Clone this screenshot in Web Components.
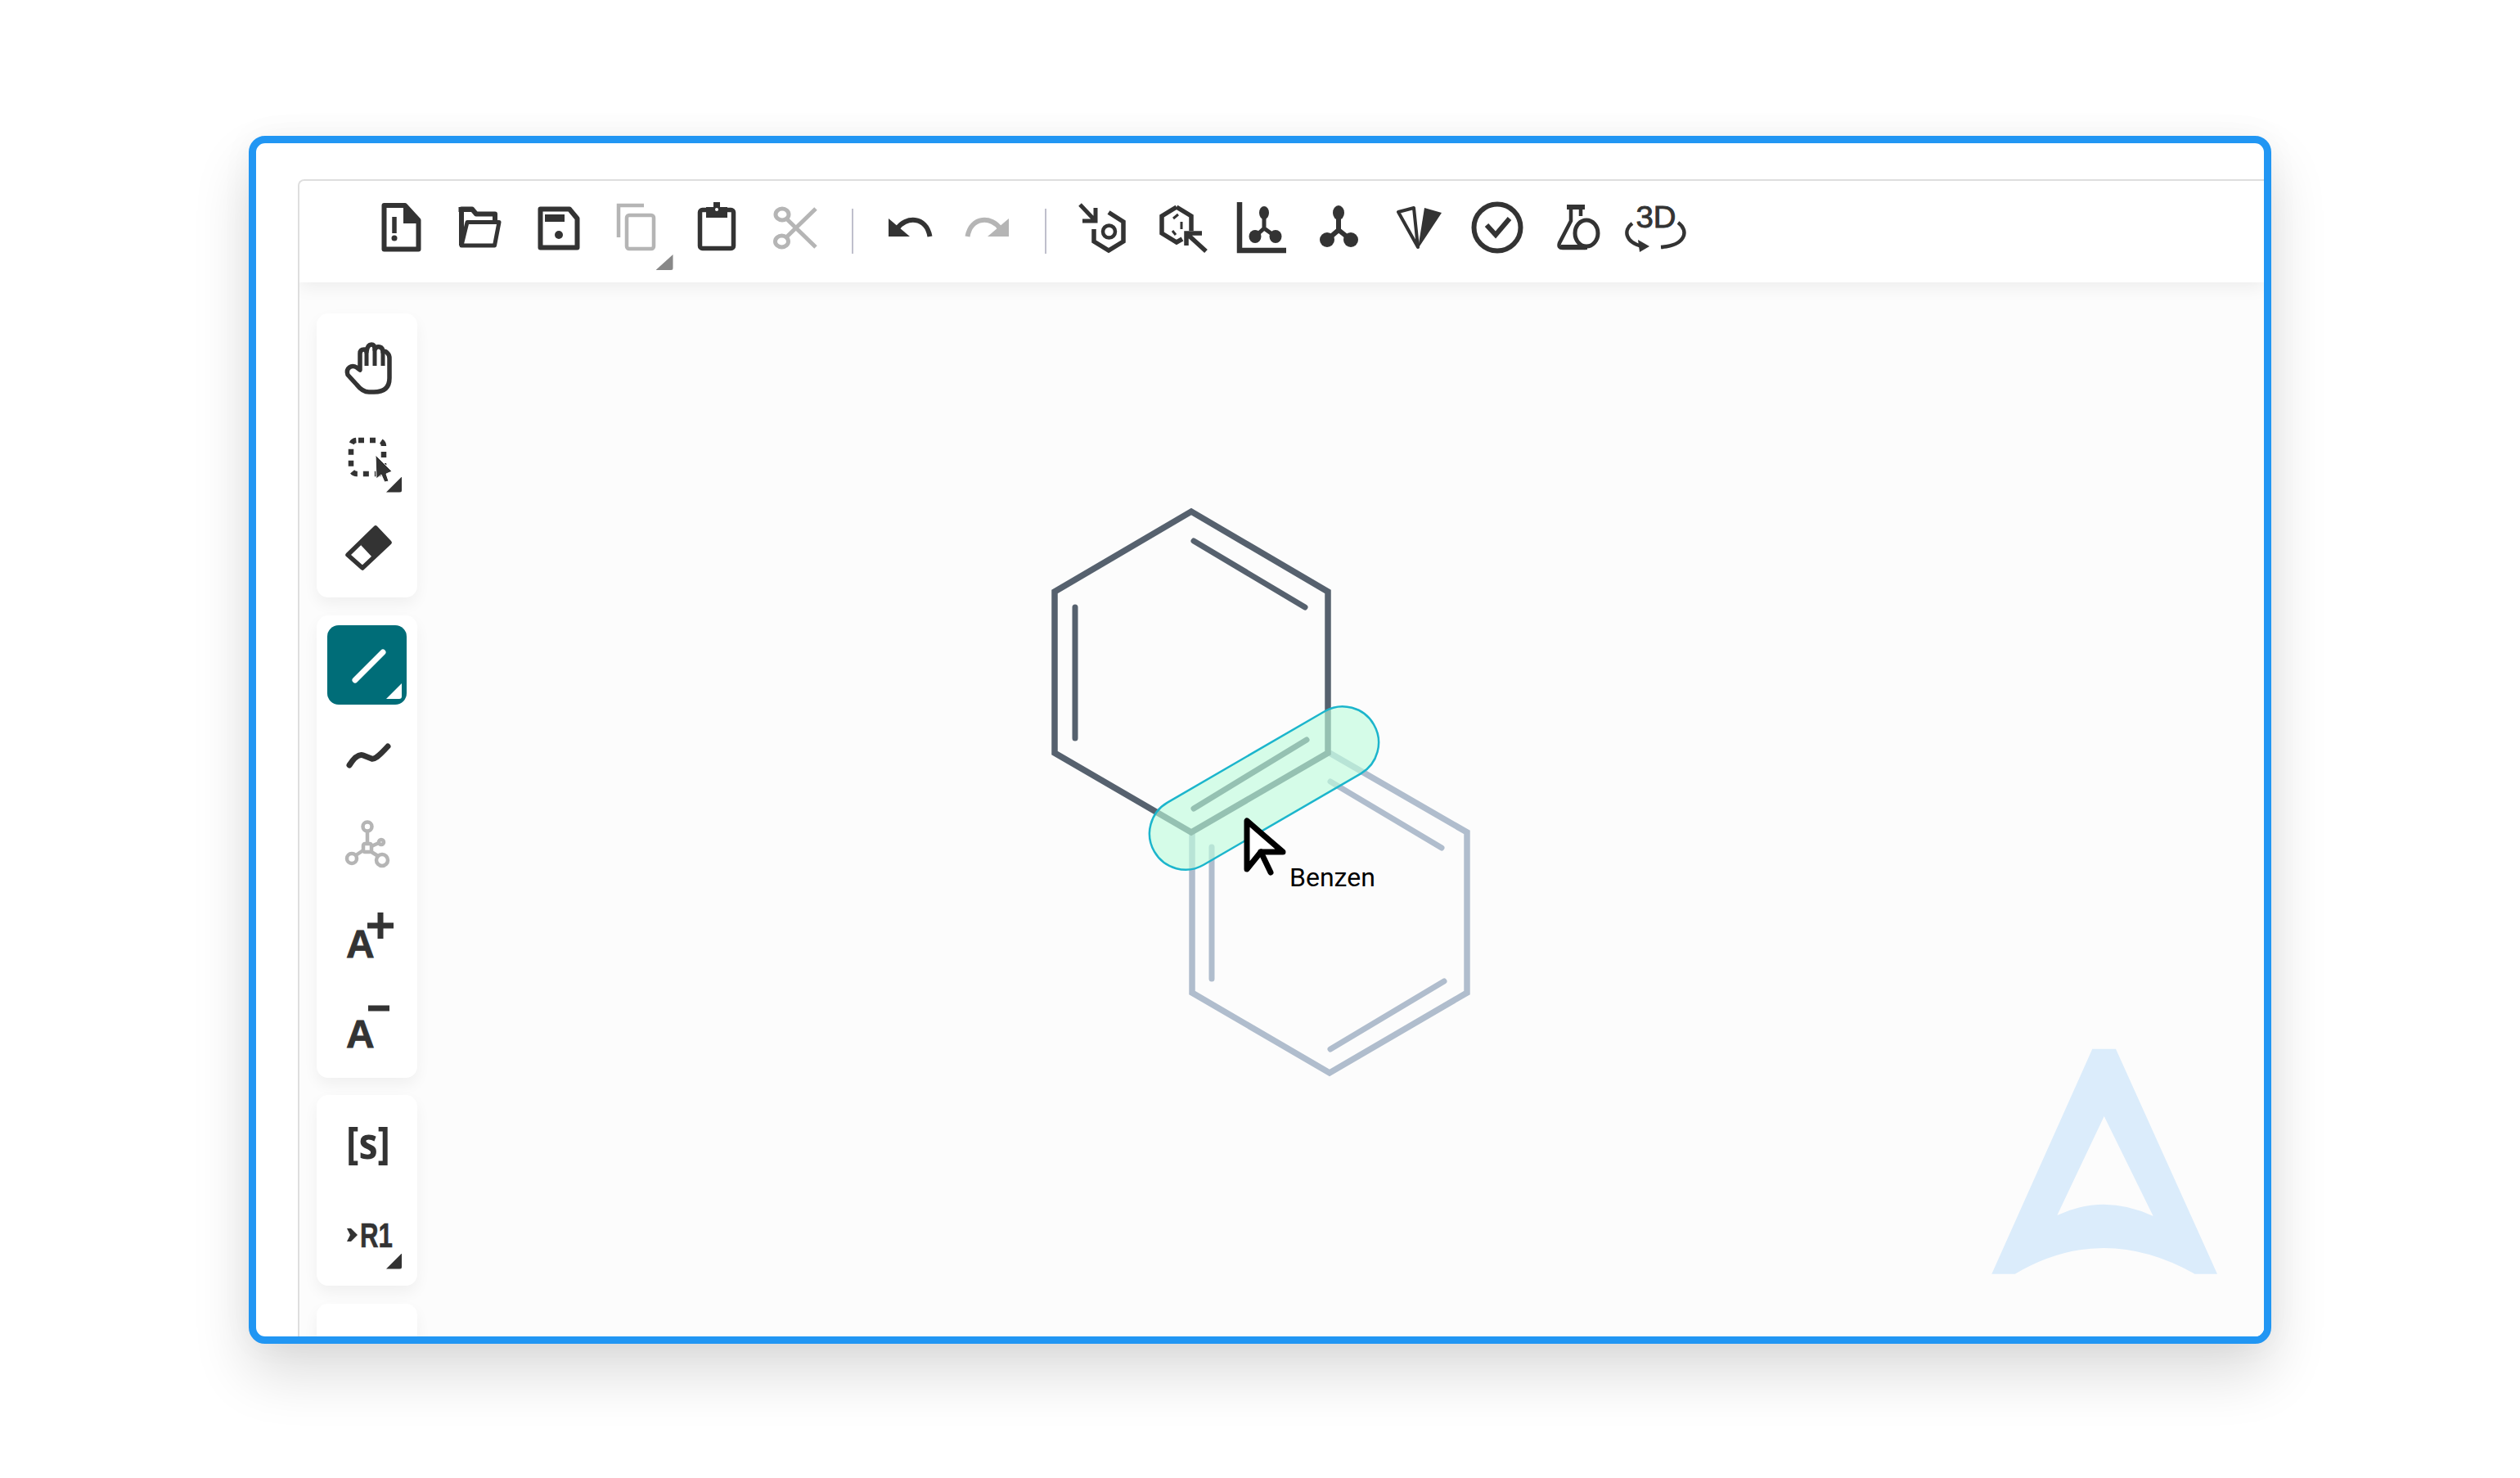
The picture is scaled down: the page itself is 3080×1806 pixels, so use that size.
<!DOCTYPE html>
<html lang="en"><head><meta charset="utf-8"><title>Editor</title>
<style>
html,body{margin:0;padding:0;background:#fff}
body{width:3080px;height:1806px;overflow:hidden;padding:166px 0 0 304px;box-sizing:border-box;font-family:"Liberation Sans",sans-serif}
</style></head><body>
<x-frame>
 <x-editor>
  <x-toolbar slot="top">
   <x-tool top><svg viewBox="-35 -35 70 70"><path d="M-20.500,-27H5L21.500,-9V26.500H-20.500Z" fill="none" stroke="currentColor" stroke-width="6" stroke-linejoin="round"/><path d="M3,-28L22,-8V-5H3Z" fill="currentColor"/><path d="M-8,-13V7" stroke="currentColor" stroke-width="5.500"/><circle cx="-8" cy="13" r="3.500" fill="currentColor"/></svg></x-tool>
   <x-tool top><svg viewBox="-35 -35 70 70"><path d="M-22,22V-22.500H-9L-4,-16.500H19V-6" fill="none" stroke="currentColor" stroke-width="6" stroke-linejoin="round"/><path d="M-25.500,-25H-8V-19H-25.500Z" fill="currentColor"/><path d="M-15,-6.500H24L18.500,22H-22Z" fill="none" stroke="currentColor" stroke-width="5" stroke-linejoin="round"/></svg></x-tool>
   <x-tool top><svg viewBox="-35 -35 70 70"><path d="M-22.500,-22.500H13L22.500,-11V24.500H-22.500Z" fill="none" stroke="currentColor" stroke-width="6" stroke-linejoin="round"/><rect x="-17" y="-16" width="24" height="9" fill="currentColor"/><circle cx="0" cy="9" r="5" fill="currentColor"/></svg></x-tool>
   <x-tool top disabled corner><svg viewBox="-35 -35 70 70"><path d="M8,-27H-23V12" fill="none" stroke="currentColor" stroke-width="4.500"/><rect x="-13" y="-15" width="33" height="41" rx="3" fill="none" stroke="currentColor" stroke-width="4.500"/></svg></x-tool>
   <x-tool top><svg viewBox="-35 -35 70 70"><rect x="-20.500" y="-21.500" width="41" height="47" rx="3" fill="none" stroke="currentColor" stroke-width="5.500"/><path d="M-13,-25H-4V-31H4V-25H13V-12H-13Z" fill="currentColor"/><circle cx="0" cy="-22" r="2" fill="#fff"/></svg></x-tool>
   <x-tool top disabled><svg viewBox="-35 -35 70 70"><g fill="none" stroke="currentColor" stroke-width="5"><ellipse cx="-16" cy="-16" rx="8" ry="7"/><ellipse cx="-16.500" cy="17" rx="8" ry="7"/><path d="M-10,-10L25,24M-10,11L25,-23"/></g></svg></x-tool>
   <x-divider></x-divider>
   <x-tool top><svg viewBox="-35 -35 70 70"><path d="M-25,-11V11H1Z" fill="currentColor"/><path d="M-14,1C-5,-13 21,-15 25.500,11" fill="none" stroke="currentColor" stroke-width="6"/></svg></x-tool>
   <x-tool top disabled><svg viewBox="-35 -35 70 70"><g transform="scale(-1,1)"><path d="M-25,-11V11H1Z" fill="currentColor"/><path d="M-14,1C-5,-13 21,-15 25.500,11" fill="none" stroke="currentColor" stroke-width="6"/></g></svg></x-tool>
   <x-divider></x-divider>
   <x-tool top><svg viewBox="-35 -35 70 70"><g fill="none" stroke="currentColor"><path d="M-27,-28L-9,-9M-8,-24V-8H-24" stroke-width="5"/><path d="M8,-18.500L26,-7V17L8,28L-10,17V2" stroke-width="5.500"/><circle cx="8.500" cy="5" r="7.500" stroke-width="4.500"/></g></svg></x-tool>
   <x-tool top><svg viewBox="-35 -35 70 70"><g fill="none" stroke="currentColor"><path d="M-5,-25L13,-14V4M2,14L-5,18L-23,7V-14L-5,-25" stroke-width="5.500"/><path d="M1,-7V2M-10,4L-6,9M-9,-11L-3,-16" stroke-width="3"/><path d="M31,29L8,8M7,22V7H26" stroke-width="5.500"/></g></svg></x-tool>
   <x-tool top><svg viewBox="-35 -35 70 70"><path d="M-25,-31V28H32" fill="none" stroke="currentColor" stroke-width="6.500"/><path d="M5,-14V1L-6,11M5,1L19,11" fill="none" stroke="currentColor" stroke-width="5"/><ellipse cx="5" cy="-18" rx="6" ry="8" fill="currentColor"/><ellipse cx="-6" cy="11" rx="7.500" ry="8" fill="currentColor"/><ellipse cx="19" cy="11" rx="7.500" ry="8" fill="currentColor"/></svg></x-tool>
   <x-tool top><svg viewBox="-35 -35 70 70"><path d="M0,-14V3L-14,15M0,3L15,15" fill="none" stroke="currentColor" stroke-width="6"/><ellipse cx="0" cy="-18" rx="7" ry="9" fill="currentColor"/><ellipse cx="-14" cy="15" rx="9" ry="9" fill="currentColor"/><ellipse cx="15" cy="15" rx="9" ry="9" fill="currentColor"/></svg></x-tool>
   <x-tool top><svg viewBox="-35 -35 70 70"><path d="M-24,-19L-5,-24L0,24Z" fill="none" stroke="currentColor" stroke-width="4" stroke-linejoin="round"/><path d="M8,-24L29,-18L0,26Z" fill="currentColor"/></svg></x-tool>
   <x-tool top><svg viewBox="-35 -35 70 70"><circle cx="1" cy="0" r="28.500" fill="none" stroke="currentColor" stroke-width="6"/><path d="M-12,-3L-1,9L16,-11" fill="none" stroke="currentColor" stroke-width="6"/></svg></x-tool>
   <x-tool top><svg viewBox="-35 -35 70 70"><g fill="none" stroke="currentColor"><path d="M-11,-25H11" stroke-width="6"/><path d="M-6,-25V-8L-20,19Q-22,25 -16,25H12M6,-25V-14" stroke-width="4.500"/><ellipse cx="13" cy="7" rx="14" ry="16" stroke-width="5"/><path d="M-18,24H14" stroke-width="6"/></g></svg></x-tool>
   <x-tool top><svg viewBox="-35 -35 70 70"><text x="2" y="0" text-anchor="middle" font-family="Liberation Sans" font-size="37" textLength="49" lengthAdjust="spacingAndGlyphs" stroke="currentColor" stroke-width=".9" fill="currentColor">3D</text><g fill="none" stroke="currentColor" stroke-width="4.500"><path d="M-27,-5C-38,3 -36,18 -15,23M29,-6C43,4 38,22 8,24"/></g><path d="M-20,15L-6,23L-18,30Z" fill="currentColor"/></svg></x-tool>
  </x-toolbar>
  <x-canvas>
   <x-side>
    <x-panel first>
     <x-tool><svg viewBox="-35 -35 70 70"><path d="M-9,2V-18Q-9,-23 -4,-23Q-1,-23 -1,-20Q0,-29 5,-29Q9,-29 9,-23Q11,-27 15,-26Q19,-25 19,-20Q22,-22 25,-18Q27,-16 27,-12V12Q27,29 8,29H2Q-6,29 -13,20L-24,8Q-26,2 -22,-1Q-18,-4 -13,-1Z" fill="none" stroke="currentColor" stroke-width="5.500" stroke-linejoin="round"/><path d="M-1,-20V-3M9,-23V-3M19,-20V-3" stroke="currentColor" stroke-width="5"/></svg></x-tool>
     <x-tool corner><svg viewBox="-35 -35 70 70"><rect x="-20" y="-22" width="40" height="41" rx="7" fill="none" stroke="currentColor" stroke-width="6.500" stroke-dasharray="7 7" stroke-dashoffset="-2"/><path d="M10,-4L30,16L23,19L26,28L21,29L17,20L11,25Z" fill="currentColor" stroke="#fff" stroke-width="1"/></svg></x-tool>
     <x-tool><svg viewBox="-35 -35 70 70"><path d="M10,-25L27,-7L-6,24L-24,8Z" fill="none" stroke="currentColor" stroke-width="5.500" stroke-linejoin="round"/><path d="M10,-26L28,-7L7,12L-8,-4Z" fill="currentColor"/></svg></x-tool>
    </x-panel>
    <x-panel>
     <x-tool active corner><svg viewBox="-35 -35 70 70"><path d="M-15,19L19,-15" stroke="currentColor" stroke-width="7" stroke-linecap="round"/></svg></x-tool>
     <x-tool><svg viewBox="-35 -35 70 70"><path d="M-22,12C-15,1 -10,-2 -5,0L5,4C9,5 13,2 25,-11" fill="none" stroke="currentColor" stroke-width="7" stroke-linecap="round"/></svg></x-tool>
     <x-tool disabled><svg viewBox="-35 -35 70 70"><g fill="none" stroke="currentColor" stroke-width="4.500"><circle cx="0" cy="-24" r="5.500"/><rect x="-5" y="-3" width="10" height="10" rx="2"/><circle cx="17" cy="-5" r="3"/><circle cx="-19" cy="15" r="6"/><circle cx="18" cy="17" r="7"/><path d="M0,-18V-3M5,0L14,-4M-5,5L-14,11M5,7L13,12"/></g></svg></x-tool>
     <x-tool><svg viewBox="-35 -35 70 70"><text x="-26" y="25" font-family="Liberation Sans" font-weight="700" font-size="48" stroke="currentColor" stroke-width=".8" fill="currentColor">A</text><path d="M0,-14H32M16,-30V2" stroke="currentColor" stroke-width="7"/></svg></x-tool>
     <x-tool><svg viewBox="-35 -35 70 70"><text x="-26" y="24" font-family="Liberation Sans" font-weight="700" font-size="48" stroke="currentColor" stroke-width=".8" fill="currentColor">A</text><path d="M1,-24H27" stroke="currentColor" stroke-width="7"/></svg></x-tool>
    </x-panel>
    <x-panel third>
     <x-tool><svg viewBox="-35 -35 70 70"><text x="1" y="19" text-anchor="middle" font-family="Open Sans" font-weight="700" font-size="54" textLength="54" lengthAdjust="spacingAndGlyphs" fill="currentColor">[s]</text></svg></x-tool>
     <x-tool corner><svg viewBox="-35 -35 70 70"><text x="-9" y="15" font-family="Liberation Sans" font-weight="700" font-size="42" textLength="40" lengthAdjust="spacingAndGlyphs" stroke="currentColor" stroke-width=".6" fill="currentColor">R1</text><path d="M-25,-8H-20L-12,0L-20,8H-25L-21,0Z" fill="currentColor"/></svg></x-tool>
    </x-panel>
    <x-panel><x-tool></x-tool></x-panel>
   </x-side>
   <x-logo></x-logo>
   <svg slot="drawing" viewBox="366 345 2401 1288">
    <g fill="none" stroke="#b0bdcd" stroke-width="7.500">
     <path d="M1625,920L1793,1017V1213L1625,1311L1457,1213V1017"/>
     <g stroke-linecap="round" stroke-width="7"><path d="M1626,955L1762,1036M1481,1035V1196M1626,1282L1765,1199"/></g>
    </g>
    <g fill="none" stroke="#56616e" stroke-width="7.500">
     <path d="M1456,1017L1289,920V723L1456,625L1623,723V920Z"/>
     <g stroke-linecap="round" stroke-width="7"><path d="M1459,661L1595,742M1314,742V902M1459,988L1597,904"/></g>
    </g>
    <rect x="-155" y="-44" width="310" height="88" rx="44" transform="translate(1545,963) rotate(-30.100)" fill="rgba(189,252,219,.62)" stroke="#1cb5cc" stroke-width="2.500"/>
    <path d="M1524,1003V1062L1541,1041L1568,1041Z" fill="#fff" stroke="#000" stroke-width="7" stroke-linejoin="round"/>
    <path d="M1541,1041L1553,1066" fill="none" stroke="#000" stroke-width="7" stroke-linecap="round"/>
    <text x="1576" y="1083" font-family="Roboto" font-size="32" fill="#000">Benzen</text>
   </svg>
  </x-canvas>
 </x-editor>
</x-frame>
<script>
function define(name, css, html){
  customElements.define(name, class extends HTMLElement{
    constructor(){super();const r=this.attachShadow({mode:"open"});r.innerHTML="<style>"+css+"</style>"+html;}
  });
}
define("x-frame",
 ":host{display:block;box-sizing:border-box;width:2472px;height:1476px;border:9px solid #2196f3;border-radius:20px;background:#fff;box-shadow:0 36px 70px rgba(0,0,0,.14),0 0 40px rgba(0,0,0,.04);padding:44px 0 0 51px;overflow:hidden}",
 "<slot></slot>");
define("x-editor",
 ":host{display:flex;flex-direction:column;height:100%;box-sizing:border-box;border-top:2px solid #dedede;border-left:2px solid #dedede;border-top-left-radius:8px;overflow:hidden;background:#fcfcfc}",
 "<slot name='top'></slot><slot></slot>");
define("x-toolbar",
 ":host{display:flex;align-items:flex-start;flex:none;box-sizing:border-box;height:124px;padding:8px 0 0 75.5px;background:#fff;position:relative;z-index:2;box-shadow:0 4px 22px rgba(0,0,0,.07)}",
 "<slot></slot>");
define("x-divider",
 ":host{display:block;flex:none;width:2px;height:55px;margin:26px 20px 0 20.5px;background:#bfbfcc}",
 "");
define("x-tool",
 ":host{display:flex;align-items:center;justify-content:center;position:relative;flex:none;width:97px;height:97px;box-sizing:border-box;color:#333;border-radius:14px}"+
 ":host([top]){width:96.5px}"+
 ":host([disabled]){color:#b5b5b5}"+
 ":host([active]){background:#006d78;color:#fff}"+
 "::slotted(svg){width:70px;height:70px;display:block;overflow:visible}"+
 ".c{display:none;position:absolute;right:6px;bottom:6.500px;width:19px;height:19px;background:currentColor;clip-path:polygon(100% 0,100% 100%,0 100%);border-bottom-right-radius:3px}"+
 ":host([corner]) .c{display:block}"+
 ":host([top]) .c{width:21px;height:19px;right:5px;bottom:-4px;background:#888}",
 "<slot></slot><span class='c'></span>");
define("x-canvas",
 ":host{display:block;flex:1;position:relative;overflow:hidden;background:#fcfcfc}"+
 "::slotted(svg){position:absolute;left:0;top:0;width:100%;height:100%;display:block}",
 "<slot name='drawing'></slot><slot></slot>");
define("x-side",
 ":host{display:flex;flex-direction:column;gap:21.5px;position:relative;z-index:1;width:123px;margin-left:21px;padding-top:38px}",
 "<slot></slot>");
define("x-panel",
 ":host{display:flex;flex-direction:column;align-items:center;gap:14px;padding:12px 0;background:#fff;border-radius:14px;box-shadow:0 8px 18px rgba(0,0,0,.05)}"+
 ":host([first]){gap:13px;padding:18px 0 12px}"+
 ":host([third]){gap:15px;padding:10px 0 14px}",
 "<slot></slot>");
define("x-logo",
 ":host{display:block;position:absolute;right:0;bottom:0;width:360px;height:360px}svg{display:block;width:100%;height:100%}",
 "<svg viewBox='2407 1273 360 360'><path fill-rule='evenodd' fill='#dbecfb' d='M2557.300,1281.700H2586L2710,1556.700H2682.700Q2570,1493.300 2462.700,1556.700H2434.300ZM2571.700,1364L2514.300,1485Q2571.700,1458 2631.700,1486Z'/></svg>");
</script>
</body></html>
